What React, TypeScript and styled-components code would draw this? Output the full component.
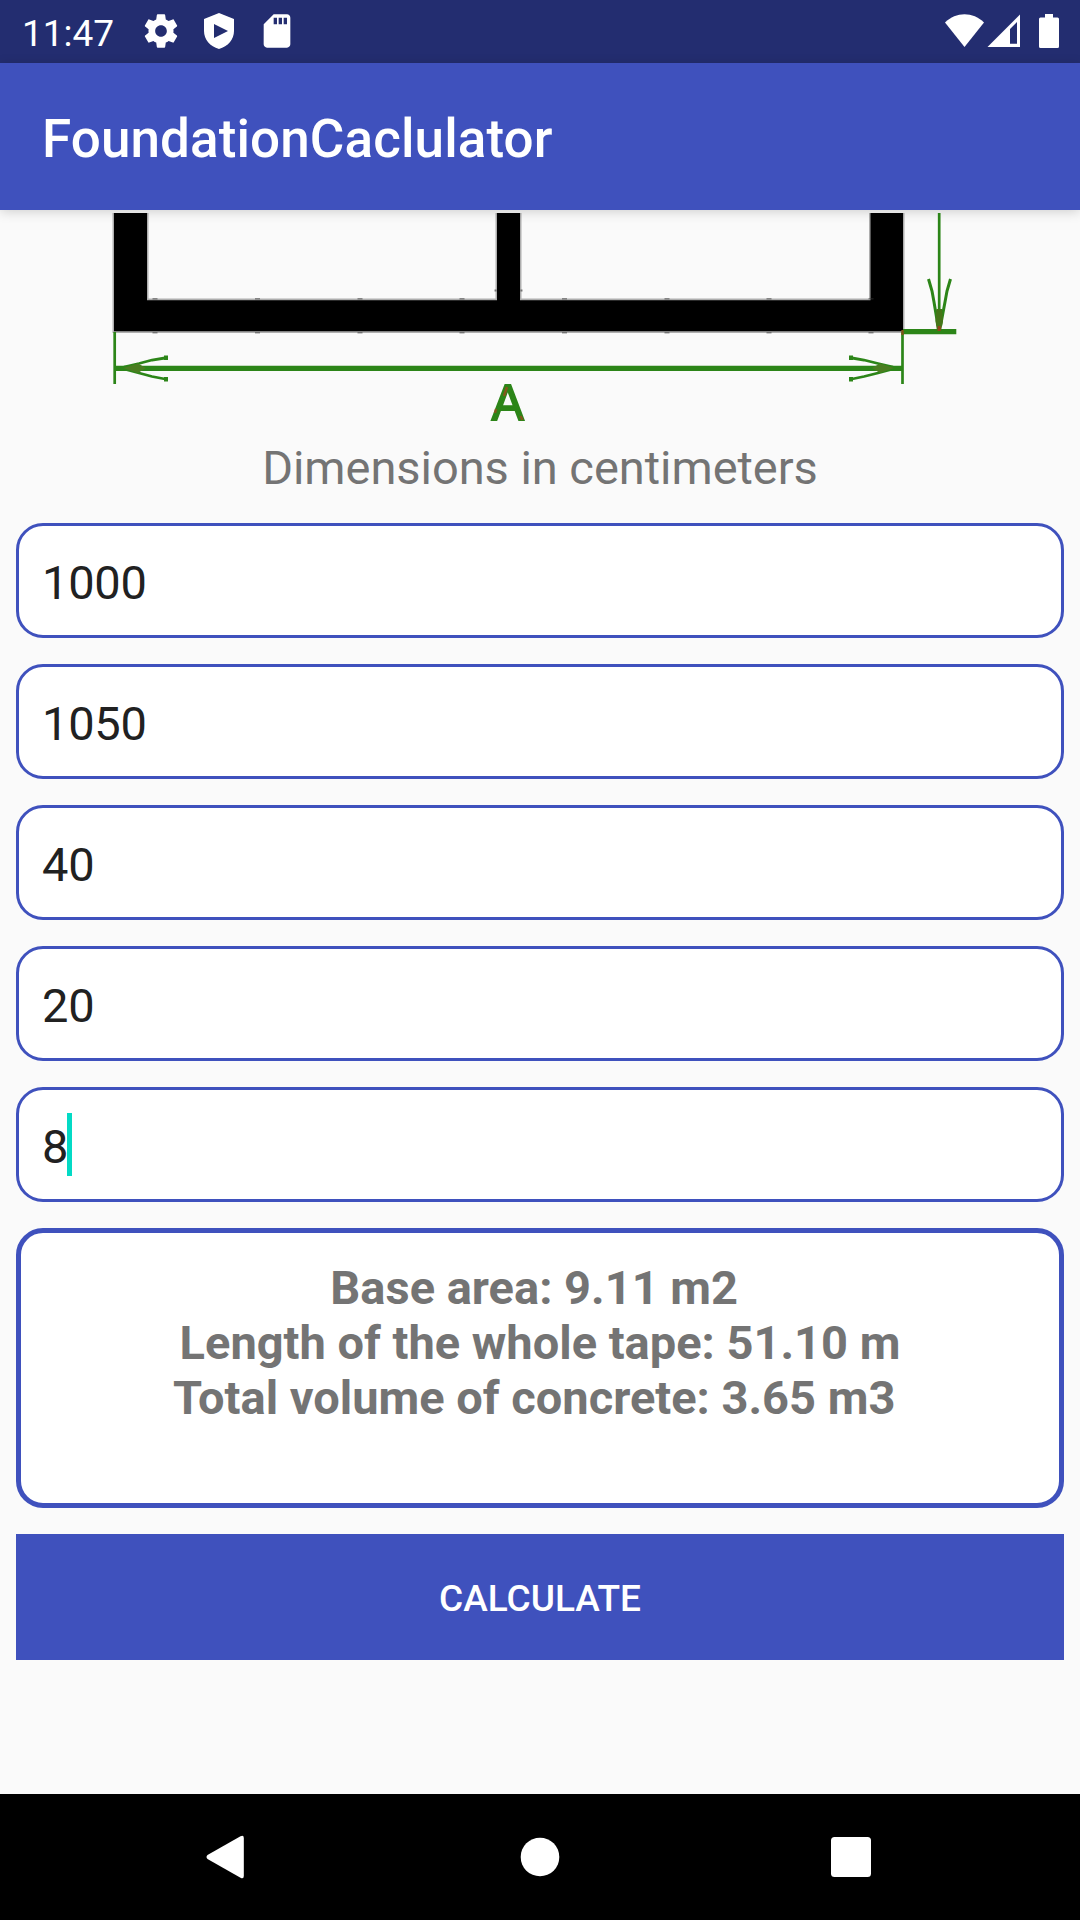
import React, { useState } from "react";
import styled, { createGlobalStyle } from "styled-components";

const color = {
  primary: "#3f51bd",
  primaryDark: "#232d70",
  accent: "#03dac5",
  page: "#fafafa",
  surface: "#ffffff",
  hint: "#747474",
  ink: "#212121",
  measure: "#2c8518",
};

const GlobalStyle = createGlobalStyle`
  *, *::before, *::after { box-sizing: border-box; }
  body { margin: 0; background: ${color.page}; font-family: Roboto, "Noto Sans", sans-serif; }
`;

const Screen = styled.div`
  display: flex;
  flex-direction: column;
  width: 1080px;
  height: 1920px;
  overflow: hidden;
  background: ${color.page};
`;

const StatusBar = styled.header`
  display: flex;
  align-items: center;
  justify-content: space-between;
  flex: none;
  height: 63px;
  padding: 0 21px 1px 22px;
  background: ${color.primaryDark};
  color: #fff;
`;

const StatusGroup = styled.div<{ $gap: number }>`
  display: flex;
  align-items: center;
  gap: ${(p) => p.$gap}px;
`;

const Clock = styled.span`
  width: 101px;
  padding-top: 4px;
  font-size: 37px;
  line-height: 43px;
`;

const Glyph = styled.svg`
  display: block;
  flex: none;
  fill: #fff;
`;

const AppBar = styled.div`
  display: flex;
  align-items: center;
  flex: none;
  height: 147px;
  padding: 4px 42px 0;
  background: ${color.primary};
  box-shadow: 0 2px 11px rgba(0, 0, 0, 0.17);
`;

const Title = styled.h1`
  margin: 0;
  color: #fff;
  font-size: 53px;
  font-weight: 500;
  letter-spacing: 0.1px;
  line-height: 62px;
`;

const Content = styled.main`
  display: flex;
  flex-direction: column;
  flex: 1;
  padding-top: 3px;
`;

const Diagram = styled.svg`
  display: block;
  flex: none;
`;

const Caption = styled.p`
  margin: 0 0 27px;
  color: ${color.hint};
  font-size: 47px;
  letter-spacing: -0.04px;
  line-height: 56px;
  text-align: center;
`;

const Form = styled.form`
  display: flex;
  flex-direction: column;
  gap: 26px;
  padding: 0 16px;
`;

const Field = styled.label`
  display: flex;
  align-items: center;
  height: 115px;
  padding: 5px 23px 0;
  border: 3px solid ${color.primary};
  border-radius: 27px;
  background: ${color.surface};
  color: ${color.ink};
  font-size: 47px;
  letter-spacing: -0.25px;
  line-height: 56px;
`;

const Caret = styled.span`
  width: 5px;
  height: 63px;
  margin: 0 0 5px -1.2px;
  background: ${color.accent};
`;

const Result = styled.output`
  display: block;
  height: 280px;
  padding: 27px 16px;
  border: 5px solid ${color.primary};
  border-radius: 27px;
  background: ${color.surface};
  color: ${color.hint};
  font-size: 47px;
  font-weight: 700;
  line-height: 55px;
  text-align: center;
  white-space: pre;
`;

const CalculateButton = styled.button`
  height: 126px;
  padding: 2px 0 0;
  border: 0;
  background: ${color.primary};
  color: #fff;
  font: 500 37px/43px Roboto, "Noto Sans", sans-serif;
  text-transform: uppercase;
`;

const NavBar = styled.nav`
  display: flex;
  align-items: center;
  justify-content: space-between;
  flex: none;
  height: 126px;
  padding: 0 198px;
  background: #000;
`;

const values = ["1000", "1050", "40", "20", "8"];
const results = "Base area: 9.11 m2 \nLength of the whole tape: 51.10 m\nTotal volume of concrete: 3.65 m3 ";
const joints = [155, 257.5, 360, 462, 564.5, 667, 769, 871];

function FoundationPlan() {
  return (
    <Diagram width="1080" height="227" viewBox="0 213 1080 227">
      <path
        d="M114 200V331.500H903V200M147 200V300H497V200M520 200V300H870.500V200"
        fill="none"
        stroke="#000"
        strokeOpacity="0.3"
        strokeWidth="3"
      />
      <path d="M114 200H147V300.300H497V200H520V300.300H870.500V200H903V331.300H114Z" />
      {joints.map((x) => (
        <g key={x} fill="#333">
          <rect x={x - 2.5} y="298" width="5" height="1.500" opacity="0.5" />
          <rect x={x - 2.5} y="332" width="5" height="1.500" opacity="0.5" />
        </g>
      ))}
      <path d="M494.500 290.500h2M520.500 290.500h2" stroke="#333" strokeOpacity="0.6" strokeWidth="2" />
      <g fill="none" stroke={color.measure}>
        <path d="M114.700 332V384M902.500 332V384M939.200 213V330" strokeWidth="2.700" />
        <path d="M115 368.400H903M903 331.700H956.300" strokeWidth="5.200" />
        <path
          d="M165 358L152 360L139 363.500L124 367M165 379L152 376.500L139 373L124 369M852 358L864 360L878 363.500L893 367M852 379L864 376.500L878 373L893 369"
          strokeWidth="2.800"
        />
        <path d="M166 355.500V360M166 377V381.500M851 355.500V360M851 377V381.500" strokeWidth="4" />
        <path d="M928.500 279L932 291L934 302L938 326M950.500 279L947 291L945 302L940.500 326" strokeWidth="3" />
      </g>
      <path d="M123 368L138 363.500L146 368L138 373Z M894 368L880 363.500L872 368L880 373Z" fill="#4a7d20" />
      <path d="M936.500 309h5.500l1 12l-2 10h-4l-1.500 -10Z" fill="#457517" />
      <rect x="937.700" y="326" width="3" height="5" fill="#93431a" />
      <rect x="901.300" y="330" width="2.400" height="5" fill="#80521a" />
      <text
        x="507.700"
        y="419.800"
        textAnchor="middle"
        fontFamily="'Liberation Sans', sans-serif"
        fontSize="50"
        textLength="32"
        lengthAdjust="spacingAndGlyphs"
        fill={color.measure}
        stroke={color.measure}
        strokeWidth="2"
      >
        A
      </text>
      <path d="M507 387L504 396M496 409L495 413M520.500 416L522.500 420" stroke="#a8451c" strokeWidth="2.500" opacity="0.7" />
    </Diagram>
  );
}

export default function App() {
  const [output] = useState(results);
  return (
    <>
      <GlobalStyle />
      <Screen>
        <StatusBar>
          <StatusGroup $gap={18}>
            <Clock>11:47</Clock>
            <Glyph width="40" height="40" viewBox="0 0 24 24">
              <path d="M19.43 12.98c.04-.32.07-.64.07-.98s-.03-.66-.07-.98l2.11-1.650c.19-.15.24-.42.12-.64l-2-3.460c-.12-.22-.39-.3-.61-.22l-2.490 1c-.52-.4-1.080-.73-1.690-.98l-.38-2.650C14.460 2.180 14.250 2 14 2h-4c-.25 0-.46.18-.49.42l-.38 2.650c-.61.25-1.170.59-1.690.98l-2.490-1c-.23-.09-.49 0-.61.22l-2 3.460c-.13.22-.07.49.12.64l2.110 1.650c-.04.32-.07.65-.07.98s.03.66.07.98l-2.110 1.650c-.19.15-.24.42-.12.64l2 3.460c.12.22.39.3.61.22l2.490-1c.52.4 1.080.73 1.690.98l.38 2.650c.03.24.24.42.49.42h4c.25 0 .46-.18.49-.42l.38-2.650c.61-.25 1.170-.59 1.690-.98l2.490 1c.23.09.49 0 .61-.22l2-3.460c.12-.22.07-.49-.12-.64l-2.110-1.650zM12 15.500c-1.930 0-3.500-1.570-3.500-3.500s1.570-3.500 3.500-3.500 3.500 1.570 3.500 3.500-1.570 3.500-3.500 3.500z" />
            </Glyph>
            <Glyph width="40" height="40" viewBox="0 0 40 40">
              <path fillRule="evenodd" d="M20 2L35 8V20C35 28.500 29 35.500 20 38C11 35.500 5 28.500 5 20V8ZM15 13V27L29 20Z" />
            </Glyph>
            <Glyph width="40" height="40" viewBox="0 0 24 24">
              <path d="M18 2h-8L4.020 8 4 20c0 1.100.9 2 2 2h12c1.100 0 2-.9 2-2V4c0-1.100-.9-2-2-2zm-6 6h-2V4h2v4zm3 0h-2V4h2v4zm3 0h-2V4h2v4z" />
            </Glyph>
          </StatusGroup>
          <Glyph width="114" height="34" viewBox="945 14 114 34">
            <path d="M945 22.500C956 11.500 973 11.500 984 22.500L964.500 47Z" />
            <path fillRule="evenodd" d="M1020 14.500V47H987.500ZM1010 29V43.700H1017V22Z" />
            <path d="M1045 14h8v3.500h4.500q1.500 0 1.500 1.500v27.500q0 1.500 -1.500 1.500h-17q-1.500 0 -1.500 -1.500v-27.500q0 -1.500 1.500 -1.500h4.500z" />
          </Glyph>
        </StatusBar>
        <AppBar>
          <Title>FoundationCaclulator</Title>
        </AppBar>
        <Content>
          <FoundationPlan />
          <Caption>Dimensions in centimeters</Caption>
          <Form onSubmit={(e) => e.preventDefault()}>
            {values.map((value, i) => (
              <Field key={value}>
                {value}
                {i === values.length - 1 && <Caret />}
              </Field>
            ))}
            <Result>{output}</Result>
            <CalculateButton type="submit">Calculate</CalculateButton>
          </Form>
        </Content>
        <NavBar>
          <Glyph width="54" height="54" viewBox="198 1830 54 54">
            <path d="M207.500 1855L240.500 1836.200Q243.800 1834.500 243.800 1838V1876Q243.800 1879.500 240.500 1877.800L207.500 1859Q205.500 1857 207.500 1855Z" />
          </Glyph>
          <Glyph width="54" height="54" viewBox="0 0 54 54">
            <circle cx="27" cy="27" r="19.300" />
          </Glyph>
          <Glyph width="54" height="54" viewBox="828 1830 54 54">
            <rect x="831" y="1837" width="40" height="40" rx="3.500" />
          </Glyph>
        </NavBar>
      </Screen>
    </>
  );
}
